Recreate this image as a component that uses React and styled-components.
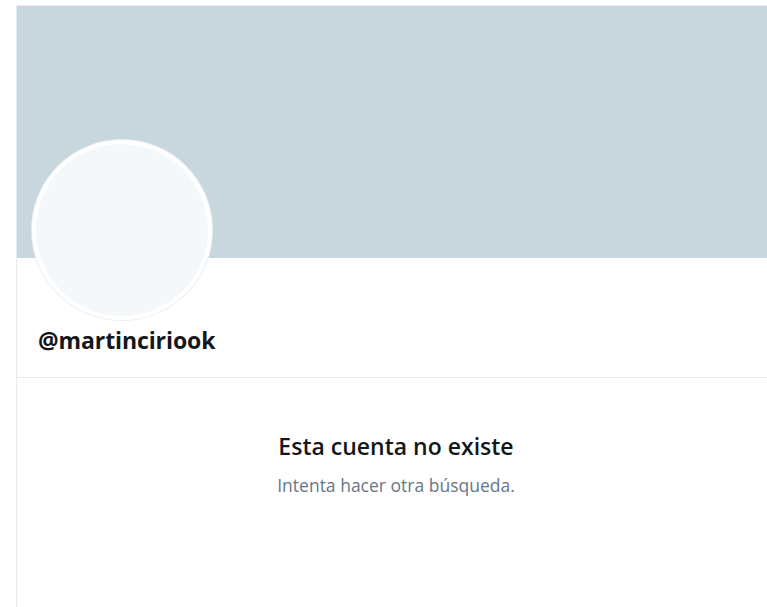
import React from "react";
import styled, { createGlobalStyle } from "styled-components";

const Global = createGlobalStyle`
  html, body { margin: 0; padding: 0; background: #ffffff; }
  body { font-family: "Open Sans", "Noto Sans", "Liberation Sans", sans-serif; }
  * { box-sizing: border-box; }
`;

const Page = styled.div`
  width: 767px;
  height: 607px;
  overflow: hidden;
  padding: 5px 0 0 16px;
  background: #ffffff;
`;

const Column = styled.main`
  height: 100%;
  border-left: 1px solid #e6ecf0;
  border-top: 1px solid #e6ecf0;
  display: flex;
  flex-direction: column;
`;

const Banner = styled.div`
  height: 252px;
  background: #c8d6de;
  flex-shrink: 0;
`;

const ProfileHeader = styled.section`
  padding: 0 15px;
  height: 120px;
  display: flex;
  flex-direction: column;
  border-bottom: 1px solid #e6ecf0;
`;

const Avatar = styled.div`
  width: 180px;
  height: 180px;
  margin-top: -118px;
  border-radius: 50%;
  background: #f5f8fa;
  border: 4px solid #ffffff;
  box-shadow: 0 0 0 1px #e9eef1;
  flex-shrink: 0;
`;

const Handle = styled.h2`
  margin: 6px 0 0 6px;
  font-size: 23px;
  line-height: 28px;
  font-weight: 700;
  color: #14171a;
  letter-spacing: -0.1px;
`;

const EmptyState = styled.section`
  display: flex;
  flex-direction: column;
  align-items: center;
  padding-top: 53px;
  padding-left: 8px;
`;

const Title = styled.h3`
  margin: 0;
  font-size: 23px;
  line-height: 30px;
  font-weight: 600;
  color: #14171a;
`;

const Subtitle = styled.p`
  margin: 13px 0 0;
  font-size: 17.5px;
  line-height: 22px;
  color: #657786;
`;

export default function App() {
  return (
    <>
      <Global />
      <Page>
        <Column>
          <Banner />
          <ProfileHeader>
            <Avatar />
            <Handle>@martinciriook</Handle>
          </ProfileHeader>
          <EmptyState>
            <Title>Esta cuenta no existe</Title>
            <Subtitle>Intenta hacer otra búsqueda.</Subtitle>
          </EmptyState>
        </Column>
      </Page>
    </>
  );
}
